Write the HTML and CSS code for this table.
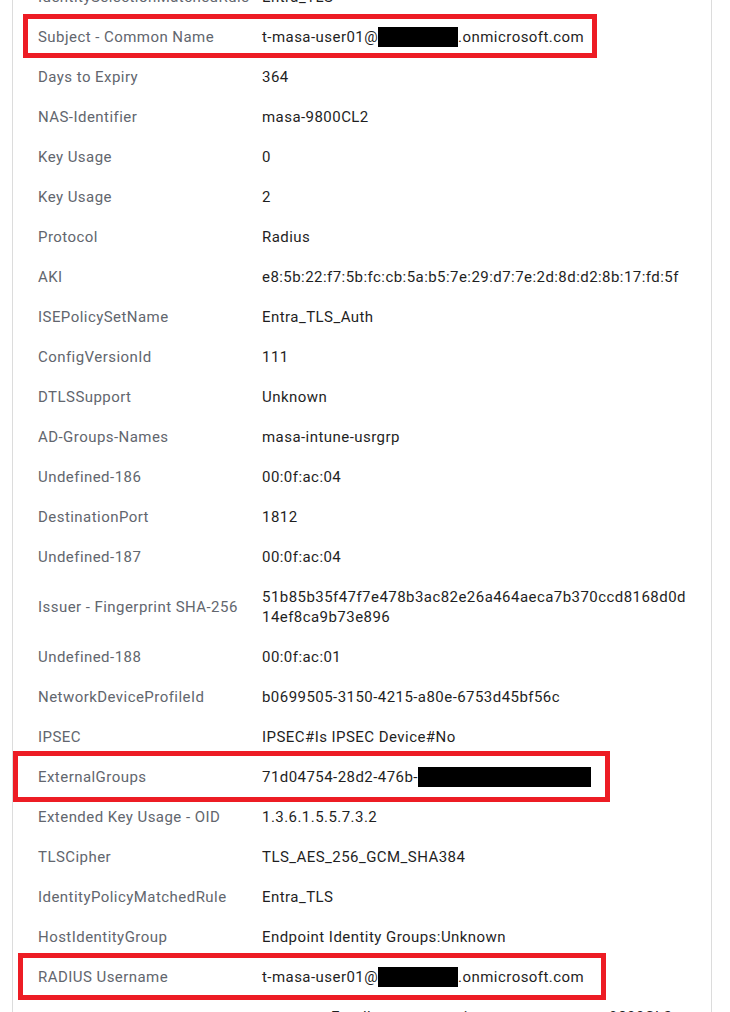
FILE: index.html
```html
<!DOCTYPE html>
<html lang="en">
<head>
  <meta charset="UTF-8">
  <meta name="viewport" content="width=device-width, initial-scale=1.0">
  <title>Authentication Details</title>
  <link rel="stylesheet" href="styles.css">
</head>
<body>

  <div class="details-panel">
    <div class="details-list">
      <div class="row"><div class="label">IdentitySelectionMatchedRule</div><div class="value">Entra_TLS</div></div>
      <div class="row">
        <div class="label">Subject - Common Name</div>
        <div class="value">t-masa-user01@<span class="redact redact-short"></span>.onmicrosoft.com</div>
        <div class="mark mark-subject"></div>
      </div>
      <div class="row"><div class="label">Days to Expiry</div><div class="value">364</div></div>
      <div class="row"><div class="label">NAS-Identifier</div><div class="value">masa-9800CL2</div></div>
      <div class="row"><div class="label">Key Usage</div><div class="value">0</div></div>
      <div class="row"><div class="label">Key Usage</div><div class="value">2</div></div>
      <div class="row"><div class="label">Protocol</div><div class="value">Radius</div></div>
      <div class="row"><div class="label">AKI</div><div class="value">e8:5b:22:f7:5b:fc:cb:5a:b5:7e:29:d7:7e:2d:8d:d2:8b:17:fd:5f</div></div>
      <div class="row"><div class="label">ISEPolicySetName</div><div class="value">Entra_TLS_Auth</div></div>
      <div class="row"><div class="label">ConfigVersionId</div><div class="value">111</div></div>
      <div class="row"><div class="label">DTLSSupport</div><div class="value">Unknown</div></div>
      <div class="row"><div class="label">AD-Groups-Names</div><div class="value">masa-intune-usrgrp</div></div>
      <div class="row"><div class="label">Undefined-186</div><div class="value">00:0f:ac:04</div></div>
      <div class="row"><div class="label">DestinationPort</div><div class="value">1812</div></div>
      <div class="row"><div class="label">Undefined-187</div><div class="value">00:0f:ac:04</div></div>
      <div class="row"><div class="label">Issuer - Fingerprint SHA-256</div><div class="value">51b85b35f47f7e478b3ac82e26a464aeca7b370ccd8168d0d14ef8ca9b73e896</div></div>
      <div class="row"><div class="label">Undefined-188</div><div class="value">00:0f:ac:01</div></div>
      <div class="row"><div class="label">NetworkDeviceProfileId</div><div class="value">b0699505-3150-4215-a80e-6753d45bf56c</div></div>
      <div class="row"><div class="label">IPSEC</div><div class="value">IPSEC#Is IPSEC Device#No</div></div>
      <div class="row">
        <div class="label">ExternalGroups</div>
        <div class="value">71d04754-28d2-476b-<span class="redact redact-long"></span></div>
        <div class="mark mark-groups"></div>
      </div>
      <div class="row"><div class="label">Extended Key Usage - OID</div><div class="value">1.3.6.1.5.5.7.3.2</div></div>
      <div class="row"><div class="label">TLSCipher</div><div class="value">TLS_AES_256_GCM_SHA384</div></div>
      <div class="row"><div class="label">IdentityPolicyMatchedRule</div><div class="value">Entra_TLS</div></div>
      <div class="row"><div class="label">HostIdentityGroup</div><div class="value">Endpoint Identity Groups:Unknown</div></div>
      <div class="row">
        <div class="label">RADIUS Username</div>
        <div class="value">t-masa-user01@<span class="redact redact-short"></span>.onmicrosoft.com</div>
        <div class="mark mark-username"></div>
      </div>
      <div class="row"><div class="label">Issuer - Subject</div><div class="value">cn=masa Enrollment - masa-intune-usrgrp, masa-9800CL2, onmicrosoft</div></div>
    </div>
  </div>

</body>
</html>
```

FILE: styles.css
```css
body {
  font-family: Roboto, "Liberation Sans", sans-serif;
  margin: 0;
  background-color: #fff;
  overflow: hidden;
  height: 1012px;
}
.details-panel {
  margin-left: 12px;
  width: 698px;
  height: 1012px;
  border-left: 1px solid #dcdcdc;
  border-right: 1px solid #dcdcdc;
  overflow: hidden;
}
/* list is scrolled a bit, the first row is cut off at the top */
.details-list {
  margin-top: -24px;
}
.row {
  position: relative;
  display: grid;
  grid-template-columns: 224px 1fr;
  align-items: center;
  padding: 11px 25px 9px 25px;
  font-size: 15px;
  line-height: 20px;
  letter-spacing: 0.45px;
}
.label {
  color: #62666e;
}
.value {
  color: #1f1f1f;
  word-break: break-all;
}
.redact {
  display: inline-block;
  height: 20px;
  background-color: #000;
  vertical-align: top;
}
.redact-short {
  width: 80px;
}
.redact-long {
  width: 173px;
}
/* red annotation boxes drawn over the rows */
.mark {
  position: absolute;
  border: 5px solid #ed1c24;
  pointer-events: none;
}
.mark-subject {
  left: 10px;
  top: -2px;
  width: 564px;
  height: 34px;
}
.mark-groups {
  left: 0;
  top: -5px;
  width: 587px;
  height: 41px;
}
.mark-username {
  left: 5px;
  top: -3px;
  width: 578px;
  height: 37px;
}
```
